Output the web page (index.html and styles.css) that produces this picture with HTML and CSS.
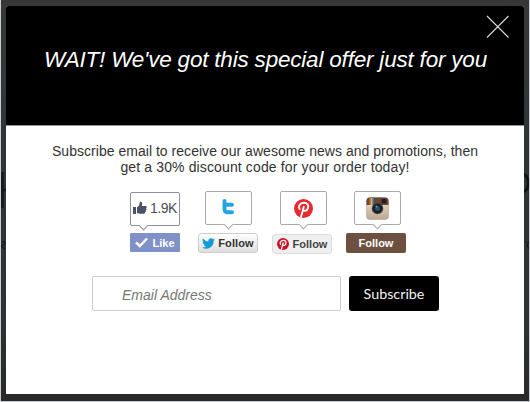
FILE: index.html
```html
<!DOCTYPE html>
<html lang="en">
<head>
<meta charset="utf-8">
<title>Special offer</title>
<link rel="stylesheet" href="styles.css">
</head>
<body>
<div class="backdrop">
  <svg class="behind" width="528" height="401" viewBox="1 0 528 401" aria-hidden="true">
    <path d="M2.500 172v36M1 190h5" stroke="#151718" stroke-width="2.500" fill="none"/>
    <path d="M523 174c7 2 7 16 0 18" stroke="#101314" stroke-width="2.500" fill="none"/>
    <path d="M2 242q3-1 3 1t-3 2 3 4M525 242h2m2 0q-3 3 0 7" stroke="#17191a" stroke-width="1.200" fill="none"/>
  </svg>
  <main class="modal">
    <header class="header">
      <h1 class="title">WAIT! We've got this special offer just for you</h1>
      <button class="close" aria-label="Close">
        <svg width="24" height="24" viewBox="0 0 24 24"><path d="M1 1l21.500 21.500M22.500 1l-21.500 21.500" stroke="#d8d8d8" stroke-width="1.100"/></svg>
      </button>
    </header>
    <section class="content">
      <p class="copy"><span class="line first">Subscribe email to receive our awesome news and promotions, then</span><span class="line second">get a 30% discount code for your order today!</span></p>
      <div class="social">
        <div class="item facebook">
          <div class="bubble">
            <svg width="14" height="14" viewBox="0 0 14 14"><path d="M0 6h3v7H0zM4 6.300C6 5.200 6.500 3.500 6.700 1.200 7.500.3 9.300.8 9.200 2.800L8.800 5h3.700c1.600 0 1.500 1.900.5 2.200.8.600.5 1.800-.3 2 .5.700.1 1.700-.6 1.900.2 1.100-.4 1.700-1.500 1.700H7L4 12z" fill="#4b5464"/></svg>
            <span>1.9K</span>
          </div>
          <div class="button">
            <svg width="13" height="11" viewBox="0 0 13 11"><path d="M1 5.500l3.800 3.500L12 1.500" fill="none" stroke="#fff" stroke-width="2.500"/></svg>
            <span>Like</span>
          </div>
        </div>
        <div class="item twitter">
          <div class="bubble">
            <svg width="12" height="16" viewBox="0 0 12 16"><path d="M2.500 2v8q0 3.300 3.500 3.300h4M2.500 5.700h7.500" fill="none" stroke="#22a5e6" stroke-width="3.900" stroke-linecap="round" stroke-linejoin="round"/></svg>
          </div>
          <div class="button">
            <svg width="13" height="11" viewBox="0 0 24 20"><path d="M24 2.400a10 10 0 0 1-2.800.8A5 5 0 0 0 23.300.4a10 10 0 0 1-3.100 1.200 5 5 0 0 0-8.400 4.500A14 14 0 0 1 1.700.9a5 5 0 0 0 1.500 6.600A5 5 0 0 1 1 6.900a5 5 0 0 0 4 4.900 5 5 0 0 1-2.200.1 5 5 0 0 0 4.600 3.400A10 10 0 0 1 0 17.400 14 14 0 0 0 21.500 4.900 10 10 0 0 0 24 2.400" fill="#159bd7"/></svg>
            <span>Follow</span>
          </div>
        </div>
        <div class="item pinterest">
          <div class="bubble">
            <svg width="19" height="19" viewBox="0 0 24 24"><circle cx="12" cy="12" r="12" fill="#e8292f"/><path d="M7.600 13.500C4.500 9 7.500 4.800 12.500 4.800c4.500 0 6.300 3.200 5.200 6.700-1.100 3.700-5.300 4.500-6.200 2M12.600 9l-3.800 14" fill="none" stroke="#fff" stroke-width="2.400"/></svg>
          </div>
          <div class="button">
            <svg width="12" height="12" viewBox="0 0 24 24"><circle cx="12" cy="12" r="12" fill="#c9152c"/><path d="M7.600 13.500C4.500 9 7.500 4.800 12.500 4.800c4.500 0 6.300 3.200 5.200 6.700-1.100 3.700-5.300 4.500-6.200 2M12.600 9l-3.800 14" fill="none" stroke="#fff" stroke-width="2.500"/></svg>
            <span>Follow</span>
          </div>
        </div>
        <div class="item instagram">
          <div class="bubble">
            <svg width="23" height="23" viewBox="0 0 23 23">
              <defs><linearGradient id="body" x2="0" y2="1"><stop stop-color="#eee3d0"/><stop offset="1" stop-color="#bca992"/></linearGradient></defs>
              <rect x=".5" y=".5" width="22" height="22" rx="3.500" fill="url(#body)" stroke="#ad9f91" stroke-width=".6"/>
              <path d="M.5 8V4Q.5.500 4 .5h15q3.500 0 3.500 3.500v4z" fill="#684638"/>
              <path d="M3 1h1.500v7H3z" fill="#d64b37"/><path d="M4.500 1H6v7H4.500z" fill="#e1b640"/><path d="M6 1h1.500v7H6z" fill="#39a1bd"/>
              <rect x="15.500" y="2" width="5" height="4.500" rx="1" fill="#241e20"/>
              <circle cx="11.500" cy="11.500" r="5.800" fill="#51443f"/><circle cx="11.500" cy="11.500" r="4.700" fill="#151d24"/><circle cx="11.500" cy="11.500" r="2.500" fill="#285363"/><circle cx="10.500" cy="9.500" r="1" fill="#749aa5"/>
            </svg>
          </div>
          <div class="button"><span>Follow</span></div>
        </div>
      </div>
      <form class="signup">
        <input class="email" type="email" placeholder="Email Address" aria-label="Email Address">
        <button class="submit" type="button">Subscribe</button>
      </form>
    </section>
  </main>
</div>
</body>
</html>
```

FILE: styles.css
```css
* { box-sizing: border-box; }
body {
  margin: 0;
  width: 530px;
  height: 402px;
  padding: 0 1px 1px;
  overflow: hidden;
  background: #c9cdcf;
  font-family: "Liberation Sans", Arial, sans-serif;
}
.backdrop {
  position: relative;
  height: 401px;
  padding: 6px 5px 7px;
  background: linear-gradient(#373737, #303435 40%, #303334 75%, #292929);
}
.behind { position: absolute; top: 0; left: 0; }
.modal {
  position: relative;
  height: 388px;
  overflow: hidden;
  border-radius: 2px 2px 0 0;
  background: #fff;
}
.header {
  position: relative;
  height: 120px;
  padding-top: 40px;
  border-bottom: 1px solid #909090;
  background: #000;
  color: #fff;
}
.title {
  margin: 0 0 0 38px;
  font-size: 22.5px;
  font-style: italic;
  font-weight: 400;
  letter-spacing: -.2px;
  line-height: 27px;
  white-space: nowrap;
}
.close {
  position: absolute;
  top: 9px;
  right: 14px;
  width: 24px;
  height: 24px;
  padding: 0;
  border: 0;
  background: none;
}
.close svg { display: block; }
.content { padding-top: 17px; }
.copy {
  margin: 0;
  color: #333;
  font-size: 14px;
  line-height: 16px;
  text-align: center;
  white-space: nowrap;
}
.line { display: block; }
.first { letter-spacing: .03px; }
.second { letter-spacing: .13px; }
.social {
  display: flex;
  align-items: flex-start;
  height: 64px;
  margin: 16px 0 0 124px;
}
.item {
  display: flex;
  flex-direction: column;
  align-items: center;
  width: 60px;
}
.bubble {
  position: relative;
  display: flex;
  align-items: center;
  justify-content: center;
  width: 47px;
  height: 34px;
  border: 1px solid #aaa;
  border-radius: 2px;
  background: #fff;
}
.bubble::after {
  content: "";
  position: absolute;
  bottom: -4px;
  left: 19px;
  width: 6px;
  height: 6px;
  border: solid #aaa;
  border-width: 0 1px 1px 0;
  background: #fff;
  transform: rotate(45deg);
}
.button {
  display: flex;
  align-items: center;
  justify-content: center;
  width: 60px;
  height: 20px;
  margin-top: 8px;
  border-radius: 3px;
  font-size: 11px;
  font-weight: 700;
  line-height: 14px;
}
.facebook { width: 50px; padding-top: 1px; }
.facebook .bubble {
  width: 50px;
  height: 34px;
  padding-bottom: 3px;
  gap: 3px;
  border-color: #8e919b;
  color: #4b4f56;
  font-size: 14px;
  letter-spacing: -.5px;
}
.facebook .bubble::after { left: 9px; border-color: #8e919b; }
.facebook .button {
  width: 50px;
  height: 19px;
  margin-top: 7px;
  gap: 4px;
  border-radius: 1px;
  background: #8090c8;
  color: #fff;
}
.twitter { margin-left: 18px; }
.twitter .bubble { padding-bottom: 2px; }
.twitter .button {
  gap: 3px;
  border: 1px solid #ccc;
  background: linear-gradient(#fff, #dedede);
  color: #333;
  letter-spacing: .1px;
}
.pinterest { margin-left: 14px; }
.pinterest .bubble { left: 1px; }
.pinterest .button {
  gap: 4px;
  margin-top: 9px;
  border: 1px solid #dcdcdc;
  background: #efefef;
  color: #444;
}
.instagram { margin-left: 14px; }
.instagram .bubble { left: 1px; }
.instagram .button {
  border-radius: 2px;
  background: #6c5141;
  color: #fff;
}
.signup {
  display: flex;
  gap: 8px;
  margin: 21px 0 0 86px;
}
.email {
  width: 249px;
  height: 35px;
  padding: 2px 29px 0;
  border: 1px solid #ccc;
  border-radius: 2px;
  background: #fff;
  font: italic 14px "Liberation Sans", Arial, sans-serif;
}
.email::placeholder { color: #777; opacity: 1; }
.submit {
  width: 90px;
  height: 35px;
  padding: 0;
  border: 0;
  border-radius: 3px;
  background: #000;
  color: #f3f3f3;
  font: 14.3px Lato, sans-serif;
}
```
